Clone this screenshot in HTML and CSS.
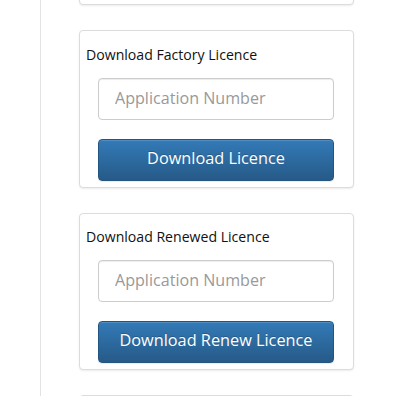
FILE: index.html
```html
<!DOCTYPE html>
<html>
<head>
<meta charset="utf-8">
<link rel="stylesheet" href="styles.css">
</head>
<body>
<div class="layout">
  <div class="gutter"></div>
  <main class="content">
    <div class="stack">
      <section class="card">
        <div class="card-label">Download Licence</div>
        <div class="card-body">
          <input class="field" type="text" placeholder="Application Number">
          <button class="btn" type="button">Download</button>
        </div>
      </section>
      <section class="card">
        <div class="card-label">Download Factory Licence</div>
        <div class="card-body">
          <input class="field" type="text" placeholder="Application Number">
          <button class="btn" type="button">Download Licence</button>
        </div>
      </section>
      <section class="card card-tight">
        <div class="card-label">Download Renewed Licence</div>
        <div class="card-body">
          <input class="field" type="text" placeholder="Application Number">
          <button class="btn" type="button">Download Renew Licence</button>
        </div>
      </section>
      <section class="card">
        <div class="card-label">Download Licence</div>
        <div class="card-body">
          <input class="field" type="text" placeholder="Application Number">
          <button class="btn" type="button">Download</button>
        </div>
      </section>
    </div>
  </main>
</div>
</body>
</html>
```

FILE: styles.css
```css
html, body {
  margin: 0;
  padding: 0;
  background: #fff;
  height: 100%;
  overflow: hidden;
}
body {
  font-family: "Open Sans", "Noto Sans", sans-serif;
  color: #222;
}
.layout {
  display: flex;
  height: 396px;
  overflow: hidden;
}
.gutter {
  width: 40px;
  flex: none;
  border-right: 1px solid #e3e3e3;
}
.content {
  flex: none;
  width: 275px;
  margin-left: 38px;
}
.stack {
  display: flex;
  flex-direction: column;
  gap: 25px;
  margin-top: -153px;
}
.card {
  border: 1px solid #dcdcdc;
  border-radius: 4px;
  box-shadow: 0 1px 2px rgba(0,0,0,0.08);
  padding: 14px 0 6px 6px;
  background: #fff;
}
.card-tight {
  padding-top: 13px;
}
.card-label {
  font-size: 14.1px;
  line-height: 20px;
  color: #111;
}
.card-body {
  display: flex;
  flex-direction: column;
  gap: 19px;
  padding: 13px 0 0 12px;
}
.field {
  box-sizing: border-box;
  width: 236px;
  height: 42px;
  border: 1px solid #ccc;
  border-radius: 4px;
  padding: 0 16px 3px;
  font-family: inherit;
  font-size: 16.1px;
  color: #555;
  box-shadow: inset 0 1px 1px rgba(0,0,0,0.075);
  outline: none;
}
.field::placeholder {
  color: #999;
}
.btn {
  box-sizing: border-box;
  width: 236px;
  height: 42px;
  border: 1px solid #245580;
  border-radius: 4px;
  background: linear-gradient(to bottom, #337ab7 0%, #265a88 100%);
  color: #fff;
  font-family: inherit;
  font-size: 16.3px;
  text-shadow: 0 -1px 0 rgba(0,0,0,0.2);
  box-shadow: inset 0 1px 0 rgba(255,255,255,0.15), 0 1px 1px rgba(0,0,0,0.075);
  cursor: pointer;
  padding: 0 0 4px;
}
```
